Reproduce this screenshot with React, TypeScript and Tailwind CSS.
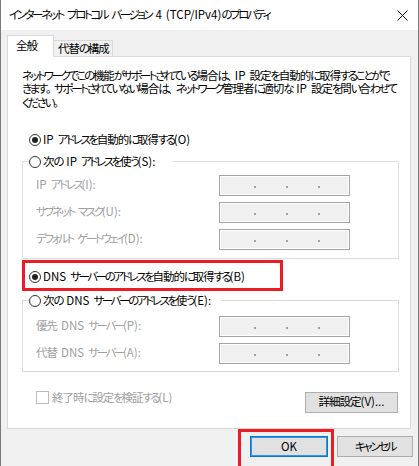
import React from "react";

const jp = "font-['Noto_Sans_CJK_JP',sans-serif] [font-feature-settings:'palt'] text-[11.5px] [word-spacing:1.5px]";

// narrow kana / kanji runs so the text takes the width of the Windows UI font
function T({ children }: { children: string }) {
  const runs = children.match(/[、。]+|[\u3040-\u30ff]+|[\u4e00-\u9fff]+|[^、。\u3040-\u30ff\u4e00-\u9fff]+/g) ?? [];
  return (
    <>
      {runs.map((r, i) => {
        const cls = /[、。]/.test(r)
          ? "tracking-[2.5px]"
          : /[\u3040-\u30ff]/.test(r)
          ? "tracking-[-2.4px]"
          : /[\u4e00-\u9fff]/.test(r)
          ? "tracking-[-1px]"
          : "tracking-[0px]";
        return (
          <span key={i} className={cls}>
            {r}
          </span>
        );
      })}
    </>
  );
}

function Radio({ checked }: { checked?: boolean }) {
  return (
    <span className="w-[12px] h-[12px] shrink-0 rounded-full border border-[#333] bg-white flex items-center justify-center">
      {checked && <span className="w-[6px] h-[6px] rounded-full bg-[#222]" />}
    </span>
  );
}

function IpField() {
  return (
    <div className="w-[131px] h-[21px] shrink-0 border border-[#a3a3a3] bg-[#f0f0f0] shadow-[inset_0_0_0_1px_#ffffff] flex items-center pl-[34px] gap-[30px] pt-[3px]">
      <span className="w-[2px] h-[2px] bg-[#9aa2b6]" />
      <span className="w-[2px] h-[2px] bg-[#9aa2b6]" />
      <span className="w-[2px] h-[2px] bg-[#9aa2b6]" />
    </div>
  );
}

function FieldRow({ label }: { label: string }) {
  return (
    <div className="flex items-center h-[21px]">
      <span className="w-[196px] shrink-0 pl-[13px] text-[#a0a0a0] whitespace-nowrap">
        <T>{label}</T>
      </span>
      <IpField />
    </div>
  );
}

export default function App() {
  return (
    <div className={`relative w-[419px] h-[466px] overflow-hidden bg-[#f0f0f0] border-x border-[#7a7a7a] text-black ${jp}`}>
      {/* title bar */}
      <div className="h-[30px] bg-white flex items-center justify-between pl-[8px] pr-[9px]">
        <span className="whitespace-nowrap">
          <T>インターネット プロトコル バージョン 4 (TCP/IPv4)のプロパティ</T>
        </span>
        <svg width="11" height="11" viewBox="0 0 11 11" className="mr-[1px]">
          <path d="M0.5 0.5 L10.5 10.5 M10.5 0.5 L0.5 10.5" stroke="#111" strokeWidth="1" fill="none" />
        </svg>
      </div>

      <div className="pl-[6px] pr-[7px]">
        {/* tabs */}
        <div className="mt-[5px] flex items-end h-[21px]">
          <div className="relative z-10 -mb-px w-[47px] h-[22px] bg-white border-t border-x border-[#d9d9d9] pl-[8px] flex items-center pb-[2px] whitespace-nowrap">
            <T>全般</T>
          </div>
          <div className="w-[59px] h-[16px] bg-[#f0f0f0] border-t border-r border-[#d9d9d9] pl-[4px] flex items-center whitespace-nowrap">
            <T>代替の構成</T>
          </div>
        </div>

        {/* panel */}
        <div className="h-[373px] bg-white border border-[#d9d9d9] pl-[14px] pr-[11px] pt-[11.5px]">
          <p className="leading-[13.5px] whitespace-nowrap">
            <T>ネットワークでこの機能がサポートされている場合は、IP 設定を自動的に取得することがで</T>
            <br />
            <T>きます。サポートされていない場合は、ネットワーク管理者に適切な IP 設定を問い合わせて</T>
            <br />
            <T>ください。</T>
          </p>

          <div className="mt-[22.5px] ml-[7px] h-[16px] flex items-center gap-[2px]">
            <Radio checked />
            <span className="whitespace-nowrap">
              <T>IP アドレスを自動的に取得する(O)</T>
            </span>
          </div>

          <fieldset className="mt-[6px] border border-[#dcdcdc] pt-[5px] pb-[8px] flex flex-col gap-[6px]">
            <legend className="ml-[6px] pr-[18px] h-[16px] flex items-center gap-[2px] bg-white">
              <Radio />
              <span className="whitespace-nowrap">
                <T>次の IP アドレスを使う(S):</T>
              </span>
            </legend>
            <FieldRow label="IP アドレス(I):" />
            <FieldRow label="サブネット マスク(U):" />
            <FieldRow label="デフォルト ゲートウェイ(D):" />
          </fieldset>

          <div className="mt-[10px] ml-[7px] h-[16px] flex items-center gap-[2px]">
            <Radio checked />
            <span className="whitespace-nowrap">
              <T>DNS サーバーのアドレスを自動的に取得する(B)</T>
            </span>
          </div>

          <fieldset className="mt-[8px] border border-[#dcdcdc] pt-[7px] pb-[7px] flex flex-col gap-[6px]">
            <legend className="ml-[6px] pr-[10px] h-[16px] flex items-center gap-[2px] bg-white">
              <Radio />
              <span className="whitespace-nowrap">
                <T>次の DNS サーバーのアドレスを使う(E):</T>
              </span>
            </legend>
            <FieldRow label="優先 DNS サーバー(P):" />
            <FieldRow label="代替 DNS サーバー(A):" />
          </fieldset>

          <div className="mt-[18px] flex items-start justify-between">
            <div className="ml-[14px] h-[16px] flex items-center gap-[3px] text-[#a0a0a0]">
              <span className="w-[13px] h-[13px] border border-[#bcbcbc] bg-white" />
              <span className="whitespace-nowrap">
                <T>終了時に設定を検証する(L)</T>
              </span>
            </div>
            <button className="mt-[2px] mr-[1px] w-[93px] h-[21px] bg-[#e1e1e1] border border-[#adadad] flex items-center justify-center whitespace-nowrap">
              <T>詳細設定(V)...</T>
            </button>
          </div>
        </div>

        {/* dialog buttons */}
        <div className="mt-[7px] -mr-[2px] flex justify-end gap-[9px]">
          <button className="w-[78px] h-[21px] bg-[#e1e1e1] border border-[#0078d7] shadow-[inset_0_0_0_1px_#3c94dc] flex items-center justify-center">
            OK
          </button>
          <button className="w-[76px] h-[21px] bg-[#e1e1e1] border border-[#adadad] flex items-center justify-center whitespace-nowrap">
            <T>キャンセル</T>
          </button>
        </div>
      </div>

      {/* annotation boxes */}
      <div className="absolute left-[21px] top-[260px] w-[261px] h-[31px] border-[3px] border-[#ed1c24]" />
      <div className="absolute left-[237px] top-[429px] w-[96px] h-[40px] border-[3px] border-[#ed1c24]" />
    </div>
  );
}
